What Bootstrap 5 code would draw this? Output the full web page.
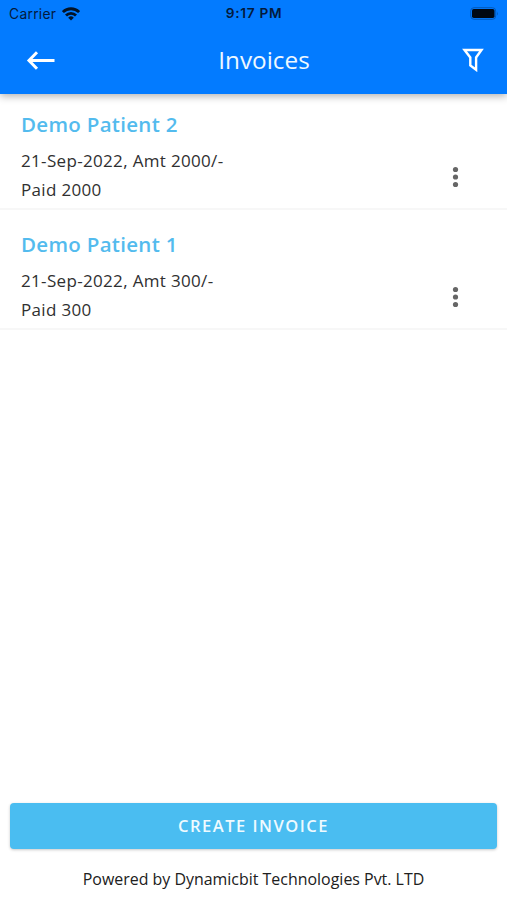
<!DOCTYPE html>
<html lang="en">
<head>
<meta charset="utf-8">
<meta name="viewport" content="width=device-width, initial-scale=1">
<title>Invoices</title>
<link href="https://cdn.jsdelivr.net/npm/bootstrap@5.3.0/dist/css/bootstrap.min.css" rel="stylesheet">
<style>
body{font-family:"Open Sans",sans-serif;color:#303030;height:100vh;overflow:hidden;background:#fff}
svg{display:block;flex:none}
.app-header{background:#037bff;height:94px;box-shadow:0 2px 8px rgba(0,0,0,.32);z-index:2}
.status-bar{height:27px;padding:0 8px 0 9px;font-family:Inter,sans-serif;color:#031a3c;line-height:27px}
.status-bar>div{flex:1 1 0}
.carrier{font-size:13.8px;letter-spacing:.3px;padding-top:1px}
.carrier-group{gap:6px}
.clock{font-size:13.7px;font-weight:600;letter-spacing:.7px}
.title-bar{height:67px;padding:0 23px 0 26px}
.title-bar h1{font-size:24.3px;line-height:66px;height:67px;color:#eef8ff;font-weight:400;padding-left:11px}
.title-bar .funnel{margin-bottom:2px}
.title-bar .back{margin-bottom:0}
.invoice{height:120px;padding:14px 46px 0 21px;border-bottom:2px solid #f7f7f7}
.invoice:first-child{height:116px}
.invoice:last-child{padding-top:18px}
.invoice h2{font-size:20.5px;line-height:32px;font-weight:600;color:#53bbee;letter-spacing:.3px}
.invoice p{font-size:17px;line-height:29.3px;letter-spacing:.33px}
.invoice .lines{padding-top:5.5px}
.more{margin-top:38px}
.page-footer{padding:0 10px}
.btn-create{height:46px;background:#4abdf1;color:#eefaff;font-size:16.5px;font-weight:600;letter-spacing:1.5px;border:0;border-radius:4px;box-shadow:0 1px 3px rgba(0,0,0,.22)}
.btn-create:hover{background:#4abdf1;color:#fff}
.powered{font-size:15.95px;line-height:24px;color:#202020;padding:18px 0 9px}
</style>
</head>
<body class="d-flex flex-column">
<header class="app-header position-relative flex-shrink-0">
  <div class="status-bar d-flex align-items-center">
    <div class="carrier-group d-flex align-items-center"><span class="carrier">Carrier</span>
      <svg width="18" height="14" viewBox="0 0 18 14" fill="none" stroke="#031327" stroke-width="2.8"><path d="M.9 5.1a11.5 11.5 0 0 1 16.2 0M4 8.5a7 7 0 0 1 10 0"/><path d="M9 13.5 6.2 10.7a4 4 0 0 1 5.6 0z" fill="#031327" stroke="none"/></svg>
    </div>
    <span class="clock">9:17 PM</span>
    <div class="d-flex justify-content-end">
      <svg width="29" height="13" viewBox="0 0 29 13"><rect x=".7" y=".7" width="25" height="11.6" rx="3.3" fill="none" stroke="#0359b8"/><rect x="2" y="2" width="22.5" height="9" rx="1.8" fill="#000812"/><path d="M27 4.5q1.5 2 0 4z" fill="#0359b8"/></svg>
    </div>
  </div>
  <div class="title-bar d-flex align-items-center justify-content-between">
    <svg class="back" width="29" height="20" viewBox="0 0 29 20" fill="none" stroke="#fff" stroke-width="3"><path d="M28.5 9.5H3M11 1.300 3 9.500l8 8.200"/></svg>
    <h1 class="m-0">Invoices</h1>
    <svg class="funnel" width="22" height="24" viewBox="0 0 22 24" fill="none" stroke="#fff" stroke-width="2.4"><path d="M2.5 2h17l-5.4 7.500v12.300L8.300 17.500V9.500z"/></svg>
  </div>
</header>
<main class="flex-grow-1">
  <section class="invoice d-flex justify-content-between">
    <div><h2 class="m-0">Demo Patient 2</h2><div class="lines"><p class="m-0">21-Sep-2022, Amt 2000/-</p><p class="m-0">Paid 2000</p></div></div>
    <svg class="more align-self-center" width="12" height="22" viewBox="0 0 12 22" fill="#666"><circle cx="6.5" cy="3.500" r="2.600"/><circle cx="6.500" cy="11" r="2.600"/><circle cx="6.500" cy="18.500" r="2.600"/></svg>
  </section>
  <section class="invoice d-flex justify-content-between">
    <div><h2 class="m-0">Demo Patient 1</h2><div class="lines"><p class="m-0">21-Sep-2022, Amt 300/-</p><p class="m-0">Paid 300</p></div></div>
    <svg class="more align-self-center" width="12" height="22" viewBox="0 0 12 22" fill="#666"><circle cx="6.500" cy="3.500" r="2.600"/><circle cx="6.500" cy="11" r="2.600"/><circle cx="6.500" cy="18.500" r="2.600"/></svg>
  </section>
</main>
<footer class="page-footer text-center">
  <button type="button" class="btn btn-create w-100 p-0">CREATE INVOICE</button>
  <p class="powered m-0">Powered by Dynamicbit Technologies Pvt. LTD</p>
</footer>
<script src="https://cdn.jsdelivr.net/npm/bootstrap@5.3.0/dist/js/bootstrap.bundle.min.js"></script>
</body>
</html>
